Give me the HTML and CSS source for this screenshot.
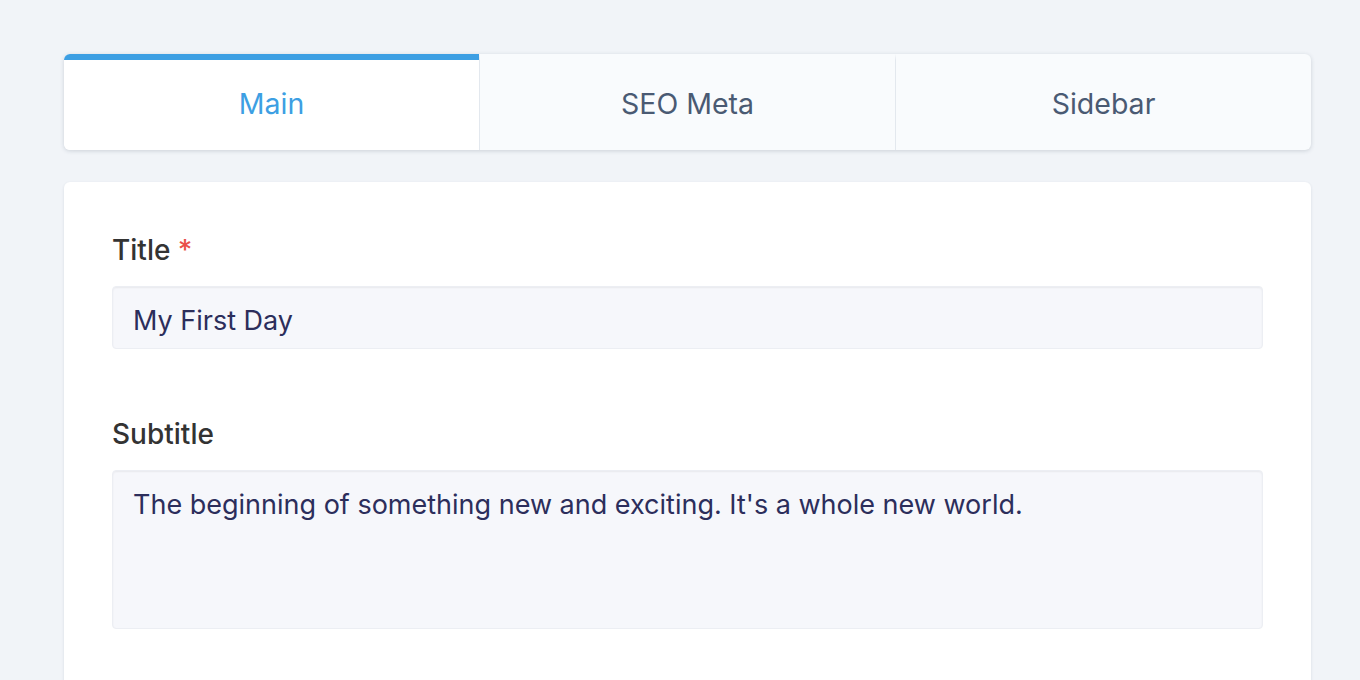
FILE: index.html
```html
<!DOCTYPE html>
<html lang="en">
<head>
    <meta charset="UTF-8">
    <meta name="viewport" content="width=device-width, initial-scale=1.0">
    <title>Edit Post</title>
    <link rel="stylesheet" href="styles.css">
</head>
<body>
    <div class="page">
        <!-- Tabs -->
        <div class="tabs">
            <div class="tab active">Main</div>
            <div class="tab">SEO Meta</div>
            <div class="tab">Sidebar</div>
        </div>

        <!-- Form Card -->
        <div class="card">
            <div class="field">
                <label class="label">Title <span class="required">*</span></label>
                <input class="input" type="text" value="My First Day">
            </div>

            <div class="field">
                <label class="label">Subtitle</label>
                <textarea class="input textarea">The beginning of something new and exciting. It's a whole new world.</textarea>
            </div>
        </div>
    </div>
</body>
</html>
```

FILE: styles.css
```css
/* Base Styles */
* {
    box-sizing: border-box;
    margin: 0;
    padding: 0;
}

body {
    font-family: 'Inter', 'Noto Sans', sans-serif;
    background: #f1f4f8;
    height: 100vh;
    overflow: hidden;
}

.page {
    padding: 54px 49px 0 64px;
    display: flex;
    flex-direction: column;
    gap: 32px;
}

/* Tabs */
.tabs {
    display: flex;
    background: #f9fbfd;
    border-radius: 6px;
    box-shadow: 0 1px 4px rgba(40, 55, 80, 0.18);
    overflow: hidden;
}

.tab {
    flex: 1;
    height: 96px;
    display: flex;
    align-items: center;
    justify-content: center;
    font-size: 28.5px;
    color: #4a5a73;
    border-left: 1px solid #e3e8ee;
    border-top: 6px solid transparent;
    padding-bottom: 4px;
}

.tab:first-child {
    border-left: none;
}

.tab.active {
    background: #ffffff;
    color: #3d9fe3;
    border-top-color: #3d9fe3;
}

/* Form Card */
.card {
    background: #ffffff;
    border-radius: 6px;
    box-shadow: 0 1px 3px rgba(40, 55, 80, 0.12);
    padding: 50px 48px 60px;
    min-height: 560px;
}

.field {
    margin-bottom: 67px;
}

.label {
    display: block;
    font-size: 28px;
    font-weight: 500;
    color: #333333;
    line-height: 36px;
    margin-bottom: 18px;
}

.required {
    color: #e9504a;
}

.input {
    display: block;
    width: 100%;
    height: 63px;
    padding: 5px 20px 0;
    font-family: inherit;
    font-size: 27px;
    color: #2c2e5b;
    background: #f6f7fb;
    border: 1px solid #eceef3;
    border-radius: 4px;
    box-shadow: inset 0 1px 2px rgba(0, 0, 0, 0.06);
    outline: none;
}

.textarea {
    height: 159px;
    padding: 16px 20px;
    line-height: 36px;
    resize: none;
}
```
